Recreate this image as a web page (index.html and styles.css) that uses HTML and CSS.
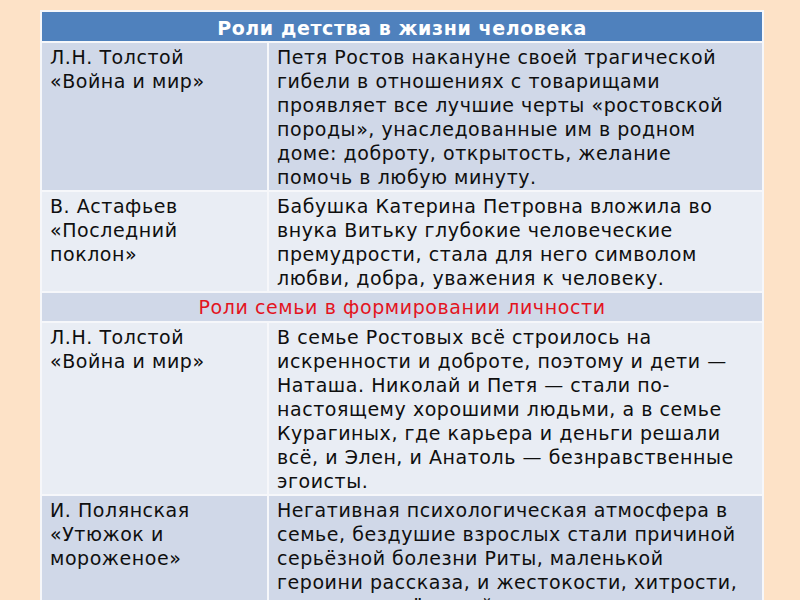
FILE: index.html
```html
<!DOCTYPE html>
<html lang="ru">
<head>
<meta charset="utf-8">
<link rel="stylesheet" href="styles.css">
</head>
<body>
<div class="slide">
  <table class="roles">
    <colgroup><col class="c1"><col class="c2"></colgroup>
    <tr class="head"><th colspan="2">Роли детства в жизни человека</th></tr>
    <tr class="dark">
      <td>Л.Н. Толстой<br>«Война и мир»</td>
      <td>Петя Ростов накануне своей трагической<br>гибели в отношениях с товарищами<br>проявляет все лучшие черты «ростовской<br>породы», унаследованные им в родном<br>доме: доброту, открытость, желание<br>помочь в любую минуту.</td>
    </tr>
    <tr class="light">
      <td>В. Астафьев<br>«Последний<br>поклон»</td>
      <td>Бабушка Катерина Петровна вложила во<br>внука Витьку глубокие человеческие<br>премудрости, стала для него символом<br>любви, добра, уважения к человеку.</td>
    </tr>
    <tr class="sub"><th colspan="2">Роли семьи в формировании личности</th></tr>
    <tr class="light">
      <td>Л.Н. Толстой<br>«Война и мир»</td>
      <td>В семье Ростовых всё строилось на<br>искренности и доброте, поэтому и дети —<br>Наташа. Николай и Петя — стали по-<br>настоящему хорошими людьми, а в семье<br>Курагиных, где карьера и деньги решали<br>всё, и Элен, и Анатоль — безнравственные<br>эгоисты.</td>
    </tr>
    <tr class="dark">
      <td>И. Полянская<br>«Утюжок и<br>мороженое»</td>
      <td>Негативная психологическая атмосфера в<br>семье, бездушие взрослых стали причиной<br>серьёзной болезни Риты, маленькой<br>героини рассказа, и жестокости, хитрости,<br>лицемерия её самой.</td>
    </tr>
  </table>
</div>
</body>
</html>
```
FILE: styles.css
```css
html, body {
  margin: 0;
  height: 600px;
  overflow: hidden;
}
body {
  background: #fde2c7;
  font-family: "DejaVu Sans", sans-serif;
  color: #0f0f0f;
}
.slide {
  padding: 10px 0 0 40px;
}
.roles {
  width: 722px;
  border-collapse: collapse;
  table-layout: fixed;
  border: 1px solid #f4f4f8;
}
.c1 { width: 227px; }
.c2 { width: 495px; }
.roles th, .roles td {
  border: 2px solid #f6f7fa;
  vertical-align: top;
  text-align: left;
  white-space: nowrap;
}
.roles td {
  font-size: 19px;
  line-height: 24px;
  letter-spacing: 0.55px;
  padding: 2px 8px 1px 8px;
}
.head th {
  background: #4f81bd;
  color: #ffffff;
  font-weight: bold;
  font-size: 19px;
  letter-spacing: 0.6px;
  text-align: center;
  height: 27px;
  padding: 2px 0 0;
  vertical-align: middle;
}
.sub th {
  background: #d0d8e8;
  color: #e3141e;
  font-weight: normal;
  font-size: 19px;
  letter-spacing: 0.6px;
  text-align: center;
  height: 28px;
  padding: 0;
  vertical-align: middle;
}
.dark td { background: #d0d8e8; }
.light td { background: #e9edf4; }
```
